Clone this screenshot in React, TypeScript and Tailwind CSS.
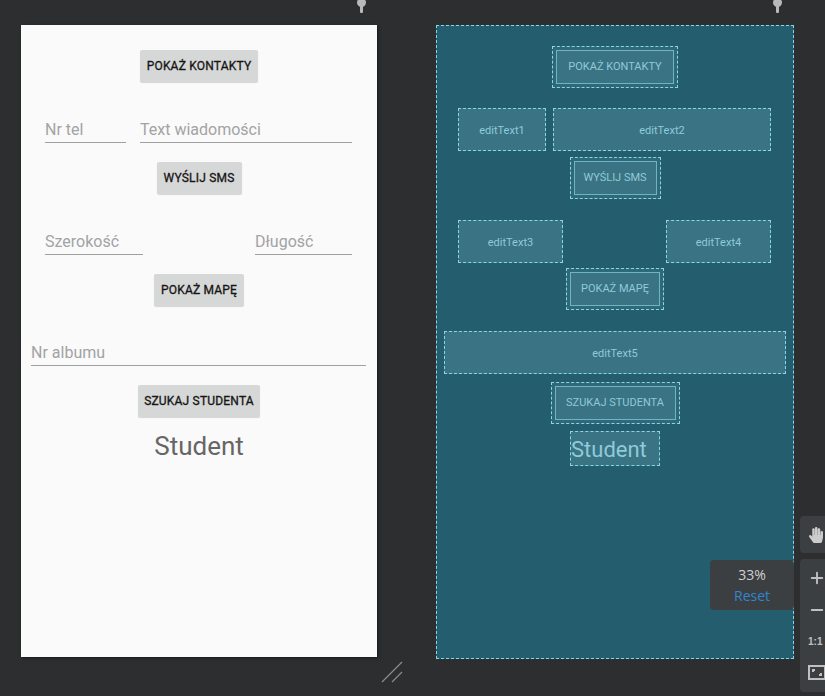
import { Plus, Minus } from "lucide-react";
import { FaHandPaper } from "react-icons/fa";

const phoneFont = { fontFamily: "Roboto, 'Liberation Sans', sans-serif" };

function PhoneButton({ label, width }: { label: string; width: string }) {
  return (
    <div
      className={`mx-auto flex h-[32px] ${width} items-center justify-center rounded-[2px] bg-[#d6d7d7] text-[12px] tracking-[0.2px] text-[#151515] shadow-[0_1px_1px_rgba(0,0,0,0.15)] [-webkit-text-stroke:0.3px_#151515]`}
    >
      {label}
    </div>
  );
}

function Field({ hint, className }: { hint: string; className: string }) {
  return (
    <div className={`border-b border-[#a0a0a0] pb-[2px] pt-[2px] text-[16px] leading-5 text-[#a3a3a3] ${className}`}>
      {hint}
    </div>
  );
}

function BlueButton({ label, width }: { label: string; width: string }) {
  return (
    <div className={`mx-auto h-[42px] ${width} border border-dashed border-[#86d6e8] bg-[#2f6879] p-[3px]`}>
      <div className="flex h-full items-center justify-center border border-[#6fb3c4] bg-[#3a7384] text-[11px] text-[#8fcad8]">
        {label}
      </div>
    </div>
  );
}

function BlueField({ label, className }: { label: string; className: string }) {
  return (
    <div
      className={`flex h-[43px] items-center justify-center border border-dashed border-[#86d6e8] bg-[#3a7384] pt-[3px] text-[11px] text-[#8fcad8] ${className}`}
    >
      {label}
    </div>
  );
}

function Pin({ left }: { left: string }) {
  return (
    <div className={`absolute top-0 ${left} flex flex-col items-center`}>
      <div className="-mt-[2px] h-[9px] w-[9px] rounded-full bg-[#b9b9b9]" />
      <div className="-mt-[2px] h-[8px] w-[3px] rounded-b-[1px] bg-[#b9b9b9]" />
    </div>
  );
}

export default function App() {
  return (
    <div className="relative h-[696px] w-[825px] overflow-hidden bg-[#2d2e30]" style={phoneFont}>
      <Pin left="left-[357px]" />
      <Pin left="left-[773px]" />

      <div className="flex items-start gap-[59px] pl-[21px] pt-[25px]">
        {/* design preview */}
        <div className="flex h-[632px] w-[356px] flex-col bg-[#fafafa] pt-[25px] shadow-[1px_1px_3px_rgba(0,0,0,0.5)]">
          <PhoneButton label="POKAŻ KONTAKTY" width="w-[118px]" />
          <div className="mt-[36px] flex gap-[14px] pl-[24px] pr-[25px]">
            <Field hint="Nr tel" className="w-[81px]" />
            <Field hint="Text wiadomości" className="flex-1" />
          </div>
          <div className="mt-[19px]">
            <PhoneButton label="WYŚLIJ SMS" width="w-[85px]" />
          </div>
          <div className="mt-[36px] flex justify-between pl-[24px] pr-[25px]">
            <Field hint="Szerokość" className="w-[98px]" />
            <Field hint="Długość" className="w-[97px]" />
          </div>
          <div className="mt-[19px]">
            <PhoneButton label="POKAŻ MAPĘ" width="w-[90px]" />
          </div>
          <div className="mt-[35px] pl-[10px] pr-[11px]">
            <Field hint="Nr albumu" className="w-full" />
          </div>
          <div className="mt-[19px]">
            <PhoneButton label="SZUKAJ STUDENTA" width="w-[122px]" />
          </div>
          <div className="mt-[13px] text-center text-[26px] leading-8 text-[#666]">Student</div>
        </div>

        {/* blueprint */}
        <div className="flex h-[634px] w-[358px] flex-col border border-dashed border-[#86d6e8] bg-[#245d6e] pt-[20px]">
          <BlueButton label="POKAŻ KONTAKTY" width="w-[126px]" />
          <div className="mt-[20px] flex gap-[7px] pl-[21px] pr-[22px]">
            <BlueField label="editText1" className="w-[88px]" />
            <BlueField label="editText2" className="flex-1" />
          </div>
          <div className="mt-[6px]">
            <BlueButton label="WYŚLIJ SMS" width="w-[91px]" />
          </div>
          <div className="mt-[21px] flex justify-between pl-[21px] pr-[22px]">
            <BlueField label="editText3" className="w-[105px]" />
            <BlueField label="editText4" className="w-[105px]" />
          </div>
          <div className="mt-[5px]">
            <BlueButton label="POKAŻ MAPĘ" width="w-[98px]" />
          </div>
          <div className="mt-[21px] pl-[7px] pr-[7px]">
            <BlueField label="editText5" className="h-[42px] w-full" />
          </div>
          <div className="mt-[8px]">
            <BlueButton label="SZUKAJ STUDENTA" width="w-[129px]" />
          </div>
          <div className="mx-auto mt-[7px] flex h-[35px] w-[90px] items-center border border-dashed border-[#86d6e8] bg-[#3a7384] pt-[2px] text-[22px] leading-none text-[#8fcad8]">
            Student
          </div>
        </div>
      </div>

      {/* resize handle */}
      <svg className="absolute left-[380px] top-[660px]" width="24" height="24" viewBox="0 0 24 24">
        <line x1="2" y1="22" x2="22" y2="2" stroke="#8a8a8a" strokeWidth="1.2" />
        <line x1="12" y1="22" x2="22" y2="12" stroke="#8a8a8a" strokeWidth="1.2" />
      </svg>

      {/* zoom info */}
      <div
        className="absolute left-[710px] top-[560px] flex h-[50px] w-[84px] flex-col items-center justify-center rounded-[4px] bg-[#3c3f41] text-[14px] leading-[21px]"
        style={{ fontFamily: "'Open Sans', 'DejaVu Sans', sans-serif" }}
      >
        <span className="text-[#cfcfcf]">33%</span>
        <span className="text-[#2f86d0]">Reset</span>
      </div>

      {/* zoom toolbar */}
      <div className="absolute left-[800px] top-[516px] flex w-[40px] flex-col gap-[6px]">
        <div className="flex h-[37px] items-center rounded-[4px] bg-[#3c3f41] pl-[8px]">
          <FaHandPaper size={16} className="text-[#cccccc]" />
        </div>
        <div className="flex h-[133px] flex-col items-start gap-[14px] rounded-[4px] bg-[#3c3f41] pl-[8px] pt-[10px] text-[#c0c0c0]">
          <Plus size={18} strokeWidth={2.5} />
          <Minus size={18} strokeWidth={2.5} />
          <span className="text-[10px] font-bold leading-[18px]" style={{ fontFamily: "'Liberation Sans', sans-serif" }}>
            1:1
          </span>
          <div className="relative h-[15px] w-[18px] border-2 border-[#c0c0c0]">
            <div className="absolute left-[2px] top-[2px] h-[3px] w-[3px] border-l-2 border-t-2 border-[#c0c0c0]" />
            <div className="absolute bottom-[2px] right-[2px] h-[3px] w-[3px] border-b-2 border-r-2 border-[#c0c0c0]" />
          </div>
        </div>
      </div>
    </div>
  );
}
